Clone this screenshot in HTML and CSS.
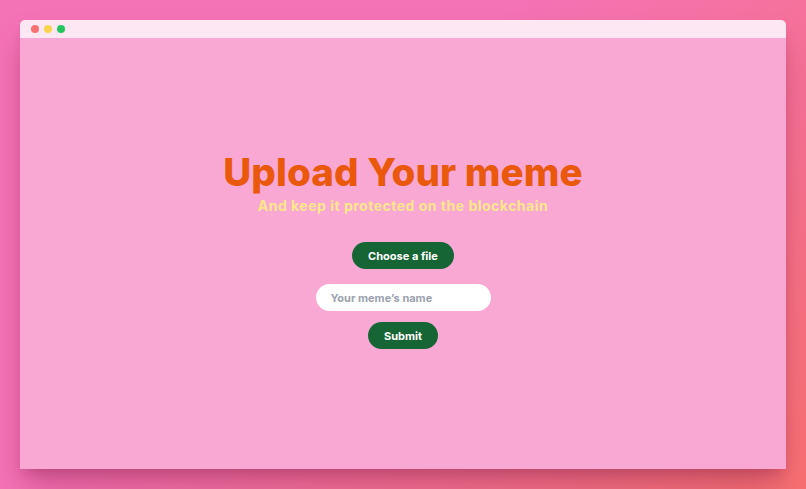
FILE: index.html
```html
<!DOCTYPE html>
<html>
<head>
<meta charset="utf-8">
<link rel="stylesheet" href="styles.css">
</head>
<body>
<div class="window">
  <div class="titlebar">
    <span class="dot red"></span>
    <span class="dot yellow"></span>
    <span class="dot green"></span>
  </div>
  <main class="content">
    <h1 class="title">Upload Your meme</h1>
    <p class="subtitle">And keep it protected on the blockchain</p>
    <form class="form">
      <label class="btn file-btn">Choose a file<input type="file" class="file-input"></label>
      <input type="text" class="name-input" placeholder="Your meme’s name">
      <button type="button" class="btn submit-btn">Submit</button>
    </form>
  </main>
</div>
</body>
</html>
```
FILE: styles.css
```css
html, body {
  margin: 0;
  padding: 0;
  width: 806px;
  height: 489px;
  overflow: hidden;
}
body {
  background: linear-gradient(135deg, #f472b6 0%, #f472b6 40%, #f87171 100%);
  font-family: Inter, "Noto Sans", sans-serif;
  padding: 20px;
  box-sizing: border-box;
}
.window {
  width: 766px;
  height: 449px;
  display: flex;
  flex-direction: column;
  border-radius: 5px 5px 0 0;
  overflow: hidden;
  box-shadow: 0 20px 30px -5px rgba(120, 20, 60, 0.35), 0 8px 12px -4px rgba(120, 20, 60, 0.2);
}
.titlebar {
  height: 18px;
  background: #fce7f3;
  display: flex;
  align-items: center;
  gap: 5px;
  padding-left: 11px;
  flex-shrink: 0;
}
.dot {
  width: 8px;
  height: 8px;
  border-radius: 50%;
}
.red { background: #f87171; }
.yellow { background: #fcd34d; }
.green { background: #22c55e; }
.content {
  flex: 1;
  background: #f9a8d4;
  display: flex;
  flex-direction: column;
  align-items: center;
  justify-content: center;
  padding-bottom: 8px;
}
.title {
  margin: 0;
  color: #ea580c;
  font-size: 38.5px;
  font-weight: 800;
  letter-spacing: 0.1px;
  line-height: 44px;
}
.subtitle {
  margin: 2px 0 0;
  color: #fde68a;
  font-size: 14px;
  font-weight: 700;
  letter-spacing: 0.5px;
  line-height: 20px;
}
.form {
  margin-top: 26px;
  display: flex;
  flex-direction: column;
  align-items: center;
}
.btn {
  background: #166534;
  color: #fff;
  border: none;
  border-radius: 999px;
  font-family: inherit;
  font-weight: 700;
  font-size: 11px;
  height: 27px;
  display: flex;
  align-items: center;
  justify-content: center;
  box-sizing: border-box;
}
.file-btn {
  width: 102px;
}
.file-input {
  display: none;
}
.name-input {
  margin-top: 15px;
  width: 175px;
  height: 27px;
  box-sizing: border-box;
  border: none;
  border-radius: 999px;
  background: #fff;
  padding: 0 15px;
  font-family: inherit;
  font-weight: 700;
  font-size: 11px;
  outline: none;
}
.name-input::placeholder {
  color: #9ca3af;
}
.submit-btn {
  margin-top: 11px;
  width: 70px;
}
```
